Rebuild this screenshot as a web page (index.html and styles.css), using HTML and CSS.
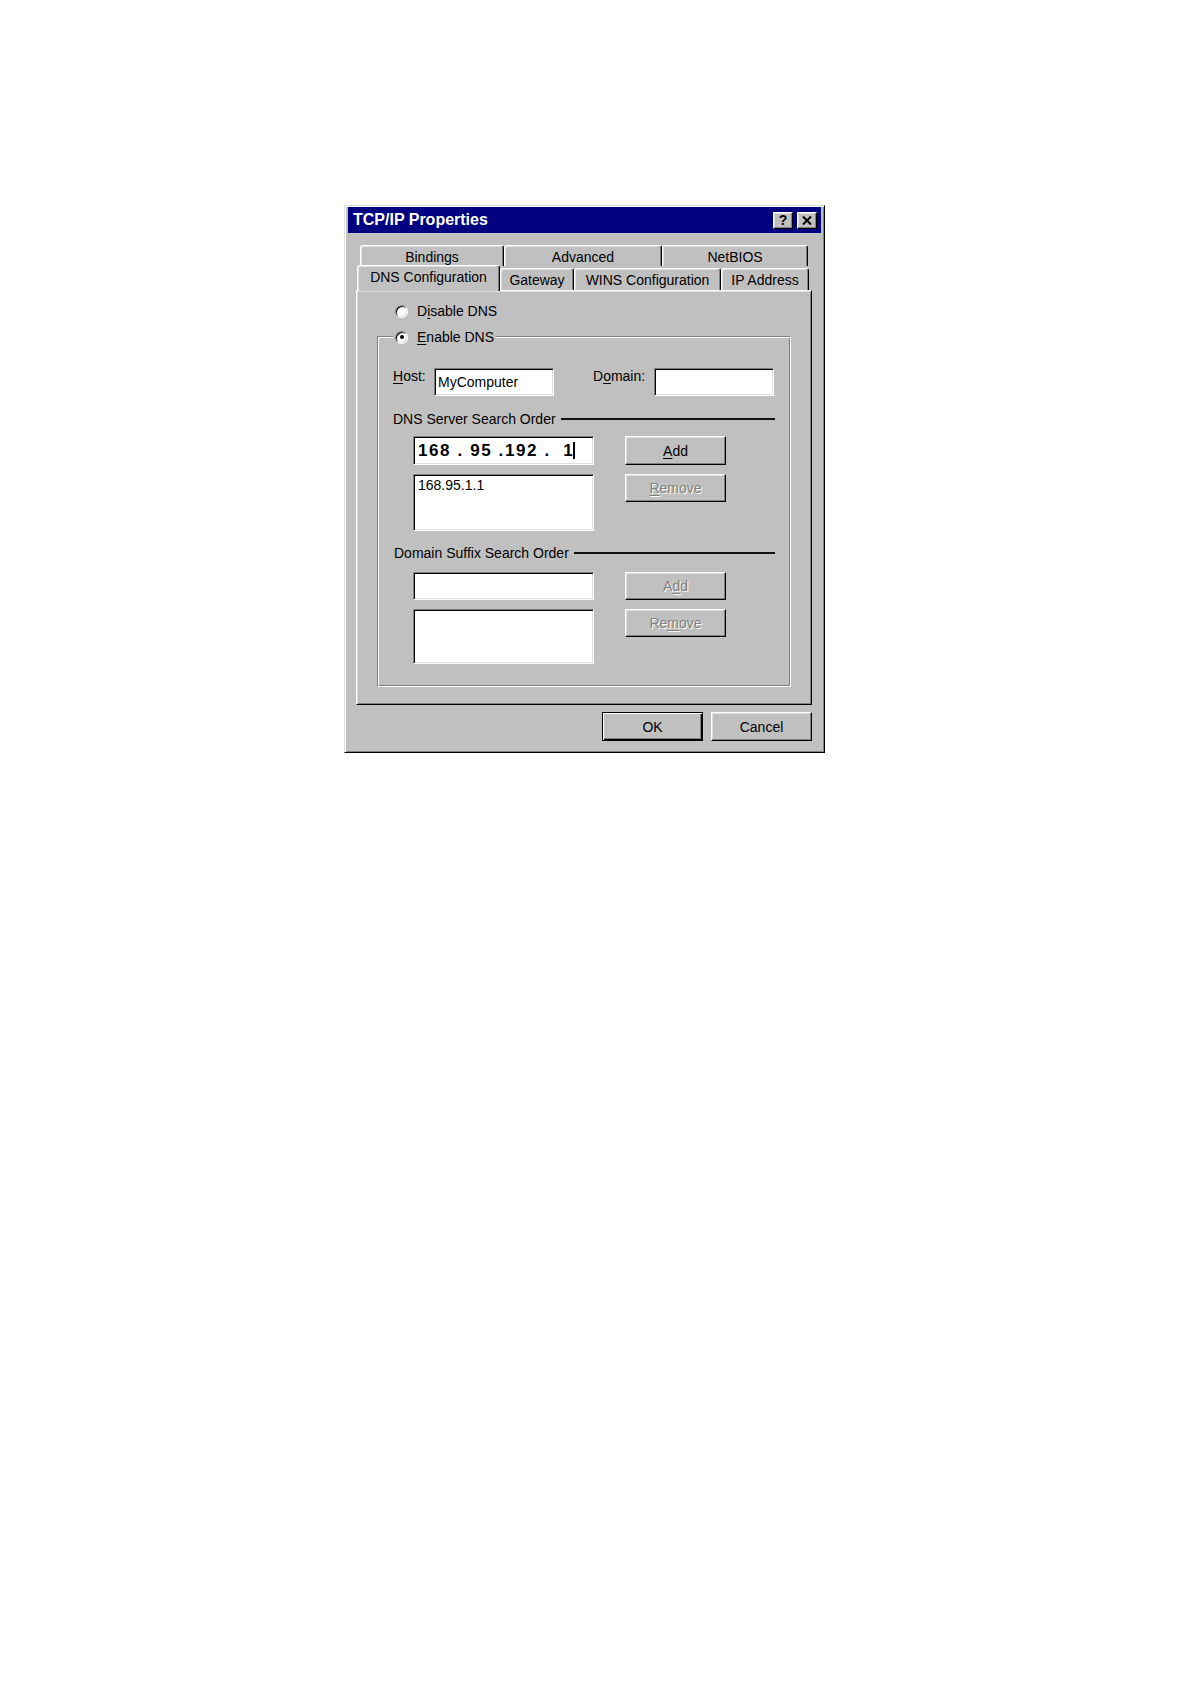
FILE: index.html
```html
<!DOCTYPE html>
<html lang="en">

<head>
    <meta charset="UTF-8" />
    <meta name="viewport" content="width=device-width, initial-scale=1.0" />
    <title>TCP/IP Properties</title>
    <link rel="stylesheet" href="styles.css">
</head>

<body>
    <div class="dialog">
        <div class="titlebar">
            <span class="title">TCP/IP Properties</span>
            <div class="caption-btns">
                <span class="cap-btn help">?</span>
                <span class="cap-btn close">
                    <svg width="10" height="9" viewBox="0 0 10 9">
                        <path d="M1 0.5 L9 8.5 M9 0.5 L1 8.5" stroke="#000" stroke-width="2" fill="none" />
                    </svg>
                </span>
            </div>
        </div>

        <div class="tabs">
            <div class="tab-row back">
                <div class="tab bindings">Bindings</div>
                <div class="tab advanced">Advanced</div>
                <div class="tab netbios">NetBIOS</div>
            </div>
            <div class="tab-row front">
                <div class="tab dns active">DNS Configuration</div>
                <div class="tab gateway">Gateway</div>
                <div class="tab wins">WINS Configuration</div>
                <div class="tab ipaddr">IP Address</div>
            </div>
        </div>

        <div class="panel">
            <div class="radio-row">
                <span class="radio"></span>
                <span>D<u>i</u>sable DNS</span>
            </div>

            <div class="group">
                <div class="group-legend radio-row">
                    <span class="radio checked"></span>
                    <span><u>E</u>nable DNS</span>
                </div>

                <div class="host-row">
                    <span class="label"><u>H</u>ost:</span>
                    <div class="field">MyComputer</div>
                    <span></span>
                    <span class="label">D<u>o</u>main:</span>
                    <div class="field"></div>
                </div>

                <div class="section-head">
                    <span>DNS Server Search Order</span>
                    <div class="rule"></div>
                </div>
                <div class="field-row">
                    <div class="field ip">168 . 95 .192 .  1<span class="caret"></span></div>
                    <button class="btn"><u>A</u>dd</button>
                </div>
                <div class="field-row list-row">
                    <div class="field list">168.95.1.1</div>
                    <button class="btn disabled"><u>R</u>emove</button>
                </div>

                <div class="section-head suffix">
                    <span>Domain Suffix Search Order</span>
                    <div class="rule"></div>
                </div>
                <div class="field-row small">
                    <div class="field"></div>
                    <button class="btn disabled">A<u>d</u>d</button>
                </div>
                <div class="field-row list-row">
                    <div class="field list short"></div>
                    <button class="btn disabled">Re<u>m</u>ove</button>
                </div>
            </div>
        </div>

        <div class="dialog-buttons">
            <button class="btn default">OK</button>
            <button class="btn">Cancel</button>
        </div>
    </div>
</body>

</html>
```

FILE: styles.css
```css
* {
    margin: 0;
    padding: 0;
    box-sizing: border-box;
}

body {
    background: #fff;
    font: 14px "Liberation Sans", Arial, sans-serif;
    color: #000;
}

u {
    text-decoration: underline;
    text-underline-offset: 2px;
}

.dialog {
    margin: 205px 0 0 344px;
    width: 481px;
    height: 548px;
    background: #c0c0c0;
    border: 1px solid;
    border-color: #dfdfdf #000 #000 #dfdfdf;
    box-shadow: inset 1px 1px 0 #fff, inset -1px -1px 0 #808080;
    padding: 1px 3px 3px 3px;
}

/* title bar */
.titlebar {
    height: 26px;
    background: #000080;
    display: flex;
    align-items: center;
    justify-content: space-between;
    padding: 0 4px 0 5px;
}

.title {
    color: #fff;
    font-weight: bold;
    font-size: 16px;
}

.caption-btns {
    display: flex;
    gap: 4px;
}

.cap-btn {
    width: 20px;
    height: 17px;
    background: #c0c0c0;
    border: 1px solid;
    border-color: #fff #000 #000 #fff;
    box-shadow: inset -1px -1px 0 #808080, inset 1px 1px 0 #dfdfdf;
    display: flex;
    align-items: center;
    justify-content: center;
    font-weight: bold;
    font-size: 14px;
    line-height: 1;
}

/* tabs */
.tabs {
    margin-top: 12px;
}

.tab-row {
    display: flex;
}

.tab-row.back {
    margin-left: 12px;
    height: 21px;
}

.tab-row.front {
    margin-left: 9px;
    height: 25px;
    margin-top: -1px;
    align-items: flex-end;
    position: relative;
}

.tab {
    background: #c0c0c0;
    border-top: 1px solid #fff;
    border-left: 1px solid #fff;
    border-right: 1px solid #000;
    border-radius: 3px 3px 0 0;
    box-shadow: inset -1px 0 0 #808080, inset 1px 1px 0 #dfdfdf;
    text-align: center;
    white-space: nowrap;
}

.back .tab {
    height: 21px;
    padding-top: 2px;
    line-height: 18px;
}

.front .tab {
    height: 22px;
    padding-top: 1px;
    line-height: 20px;
}

.bindings { width: 144px; }
.advanced { width: 158px; }
.netbios { width: 146px; }
.dns { width: 143px; }
.gateway { width: 74px; }
.wins { width: 147px; }
.ipaddr { width: 88px; }

.front .tab.active {
    height: 26px;
    padding-top: 0;
    line-height: 22px;
    margin-bottom: -1px;
    position: relative;
    z-index: 2;
}

/* panel */
.panel {
    margin-left: 8px;
    width: 456px;
    height: 415px;
    border: 1px solid;
    border-color: #fff #000 #000 #fff;
    box-shadow: inset 1px 1px 0 #dfdfdf, inset -1px -1px 0 #808080;
    padding-top: 12px;
}

.radio-row {
    display: flex;
    align-items: center;
    gap: 9px;
    height: 16px;
    margin-left: 38px;
}

.radio {
    width: 13px;
    height: 13px;
    border-radius: 50%;
    background: #fff;
    border: 1px solid;
    border-color: #808080 #fff #fff #808080;
    box-shadow: inset 1px 1px 0 #000, inset -1px -1px 0 #dfdfdf;
    display: flex;
    align-items: center;
    justify-content: center;
}

.radio.checked::after {
    content: "";
    width: 4px;
    height: 4px;
    border-radius: 50%;
    background: #000;
}

.group {
    position: relative;
    margin: 17px 0 0 20px;
    width: 414px;
    height: 351px;
    border: 1px solid;
    border-color: #808080 #fff #fff #808080;
    box-shadow: inset 1px 1px 0 #fff, inset -1px -1px 0 #808080;
    padding: 31px 15px 0 15px;
}

.group-legend {
    position: absolute;
    top: -8px;
    left: 15px;
    margin-left: 0;
    padding: 0 2px;
    background: #c0c0c0;
}

.host-row {
    display: grid;
    grid-template-columns: 41px 120px 39px 61px 120px;
    height: 28px;
}

.label {
    line-height: 16px;
}

.field {
    background: #fff;
    border: 1px solid;
    border-color: #808080 #fff #fff #808080;
    box-shadow: inset 1px 1px 0 #000, inset -1px -1px 0 #dfdfdf;
    padding: 0 3px;
    display: flex;
    align-items: center;
    white-space: pre;
}

.section-head {
    display: flex;
    align-items: center;
    gap: 5px;
    height: 16px;
    margin-top: 15px;
}

.section-head.suffix {
    margin-top: 14px;
    padding-left: 1px;
}

.rule {
    flex: 1;
    height: 2px;
    background: #111;
}

.field-row {
    display: grid;
    grid-template-columns: 181px 101px;
    column-gap: 31px;
    align-items: start;
    margin: 9px 0 0 20px;
    height: 29px;
}

.field-row.small {
    margin-top: 11px;
    height: 28px;
}

.field-row.list-row {
    height: 57px;
}

.field-row > .field {
    height: 100%;
}

.field.ip {
    font-weight: bold;
    font-size: 17px;
    letter-spacing: 1.6px;
    padding-left: 4px;
}

.caret {
    display: inline-block;
    width: 2px;
    height: 17px;
    background: #000;
    margin-left: -1px;
}

.field.list {
    align-items: flex-start;
    padding: 2px 4px;
    line-height: 16px;
}

.field.list.short {
    height: 55px;
}

.btn {
    font: inherit;
    color: #000;
    width: 101px;
    height: 29px;
    background: #c0c0c0;
    border: 1px solid;
    border-color: #fff #000 #000 #fff;
    box-shadow: inset -1px -1px 0 #808080, inset 1px 1px 0 #dfdfdf;
    text-align: center;
}

.small .btn,
.list-row .btn {
    height: 28px;
}

.btn.disabled {
    color: #808080;
    text-shadow: 1px 1px 0 #fff;
}

.btn.default {
    border: 1px solid #000;
    box-shadow: inset 1px 1px 0 #fff, inset -1px -1px 0 #000, inset -2px -2px 0 #808080;
}

.dialog-buttons {
    display: flex;
    justify-content: flex-end;
    gap: 8px;
    margin-top: 7px;
    padding-right: 9px;
}
```
